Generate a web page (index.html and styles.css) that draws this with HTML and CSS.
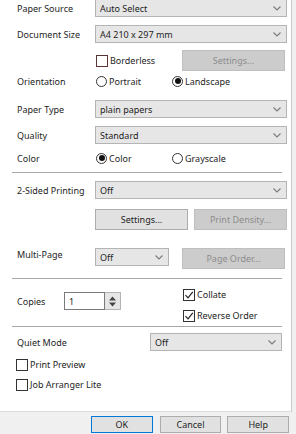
FILE: index.html
```html
<!DOCTYPE html>
<html lang="en">
<head>
    <meta charset="UTF-8">
    <meta name="viewport" content="width=device-width, initial-scale=1.0">
    <title>Printing Preferences</title>
    <link rel="stylesheet" href="styles.css">
</head>
<body>
    <div class="panel">
        <div class="row row-source">
            <span class="label">Paper Source</span>
            <div class="select wide">Auto Select<svg class="chev" width="8" height="5" viewBox="0 0 8 5"><path d="M0.5 0.5 L4 4 L7.5 0.5" fill="none" stroke="#7a7a7a" stroke-width="1.1"/></svg></div>
        </div>
        <div class="row row-docsize">
            <span class="label">Document Size</span>
            <div class="select wide">A4 210 x 297 mm<svg class="chev" width="8" height="5" viewBox="0 0 8 5"><path d="M0.5 0.5 L4 4 L7.5 0.5" fill="none" stroke="#7a7a7a" stroke-width="1.1"/></svg></div>
        </div>
        <div class="row row-borderless">
            <span class="label"></span>
            <label class="check border-red"><span class="box"></span>Borderless</label>
            <button class="btn disabled btn-settings">Settings...</button>
        </div>
        <div class="row row-orient">
            <span class="label">Orientation</span>
            <label class="radio col-a"><span class="dot"></span>Portrait</label>
            <label class="radio"><span class="dot on"></span>Landscape</label>
        </div>
        <div class="row row-ptype">
            <span class="label">Paper Type</span>
            <div class="select wide">plain papers<svg class="chev" width="8" height="5" viewBox="0 0 8 5"><path d="M0.5 0.5 L4 4 L7.5 0.5" fill="none" stroke="#7a7a7a" stroke-width="1.1"/></svg></div>
        </div>
        <div class="row row-quality">
            <span class="label">Quality</span>
            <div class="select wide">Standard<svg class="chev" width="8" height="5" viewBox="0 0 8 5"><path d="M0.5 0.5 L4 4 L7.5 0.5" fill="none" stroke="#7a7a7a" stroke-width="1.1"/></svg></div>
        </div>
        <div class="row row-color">
            <span class="label">Color</span>
            <label class="radio col-a"><span class="dot on"></span>Color</label>
            <label class="radio"><span class="dot"></span>Grayscale</label>
        </div>
        <div class="sep sep-1"></div>
        <div class="row row-duplex">
            <span class="label">2-Sided Printing</span>
            <div class="select wide">Off<svg class="chev" width="8" height="5" viewBox="0 0 8 5"><path d="M0.5 0.5 L4 4 L7.5 0.5" fill="none" stroke="#7a7a7a" stroke-width="1.1"/></svg></div>
        </div>
        <div class="row row-duplex-btns">
            <span class="label"></span>
            <button class="btn btn-half">Settings...</button>
            <button class="btn disabled btn-half btn-density">Print Density...</button>
        </div>
        <div class="row row-multi">
            <span class="label">Multi-Page</span>
            <div class="select short">Off<svg class="chev" width="8" height="5" viewBox="0 0 8 5"><path d="M0.5 0.5 L4 4 L7.5 0.5" fill="none" stroke="#7a7a7a" stroke-width="1.1"/></svg></div>
            <button class="btn disabled btn-order">Page Order...</button>
        </div>
        <div class="sep sep-2"></div>
        <div class="copies">
            <div class="copies-left">
                <span class="copies-label">Copies</span>
                <div class="spin">
                    <span class="spin-value">1</span>
                    <span class="spin-arrows">
                        <svg width="7" height="5" viewBox="0 0 7 5"><path d="M0 4.5 L3.5 0.5 L7 4.5 Z" fill="#444"/></svg>
                        <svg width="7" height="5" viewBox="0 0 7 5"><path d="M0 0.5 L3.5 4.5 L7 0.5 Z" fill="#444"/></svg>
                    </span>
                </div>
            </div>
            <div class="copies-right">
                <label class="check"><span class="box"><svg width="10" height="10" viewBox="0 0 10 10"><path d="M1.5 5.2 L4 7.8 L8.8 1.8" fill="none" stroke="#222" stroke-width="1.2"/></svg></span>Collate</label>
                <label class="check"><span class="box"><svg width="10" height="10" viewBox="0 0 10 10"><path d="M1.5 5.2 L4 7.8 L8.8 1.8" fill="none" stroke="#222" stroke-width="1.2"/></svg></span>Reverse Order</label>
            </div>
        </div>
        <div class="sep sep-3"></div>
        <div class="row row-quiet">
            <span class="label quiet-label">Quiet Mode</span>
            <div class="select quiet">Off<svg class="chev" width="8" height="5" viewBox="0 0 8 5"><path d="M0.5 0.5 L4 4 L7.5 0.5" fill="none" stroke="#7a7a7a" stroke-width="1.1"/></svg></div>
        </div>
        <label class="check solo preview"><span class="box"></span>Print Preview</label>
        <label class="check solo arranger"><span class="box"></span>Job Arranger Lite</label>
    </div>
    <div class="footer">
        <button class="btn foot-btn btn-ok">OK</button>
        <button class="btn foot-btn">Cancel</button>
        <button class="btn foot-btn btn-help">Help</button>
    </div>
</body>
</html>
```

FILE: styles.css
```css
body {
    margin: 0;
    padding: 0;
    font-family: "Noto Sans", "Open Sans", sans-serif;
    font-size: 9px;
    color: #1e1e1e;
    background: #f0f0f0;
    width: 296px;
    height: 434px;
    overflow: hidden;
}

.panel {
    background: #fff;
    width: 274px;
    height: 411px;
    padding-left: 17px;
    border-right: 1px solid #c9c9c9;
    border-bottom: 1px solid #dcdcdc;
    box-sizing: content-box;
    display: flex;
    flex-direction: column;
}

.row {
    display: flex;
    align-items: center;
    flex-shrink: 0;
}

.label {
    width: 78px;
    flex-shrink: 0;
}

.select {
    box-sizing: border-box;
    height: 18px;
    border: 1px solid #b4b4b4;
    background: #e6e6e6;
    padding-left: 4px;
    display: flex;
    align-items: center;
    justify-content: space-between;
    padding-right: 5px;
}

.select.wide {
    width: 192px;
}

.select.short {
    width: 74px;
}

.select.quiet {
    width: 132px;
}

.chev {
    flex-shrink: 0;
}

.row-source { margin-top: -1px; }
.row-docsize { margin-top: 8px; }
.row-borderless { margin-top: 7px; height: 21px; }
.row-orient { margin-top: 3px; height: 14px; }
.row-ptype { margin-top: 12px; }
.row-quality { margin-top: 8px; }
.row-color { margin-top: 7px; height: 14px; }
.row-duplex { margin-top: 8px; }
.row-duplex-btns { margin-top: 10px; }
.row-multi { margin-top: 18px; align-items: flex-start; }
.row-quiet { margin-top: 6px; }

.check, .radio {
    display: flex;
    align-items: center;
    gap: 2px;
}

.box {
    width: 12px;
    height: 12px;
    box-sizing: border-box;
    border: 1px solid #333;
    background: #fff;
    display: flex;
    align-items: center;
    justify-content: center;
}

.border-red .box {
    border-color: #5a3434;
}

.border-red {
    margin-left: 1px;
    width: 86px;
}

.dot {
    width: 11px;
    height: 11px;
    box-sizing: border-box;
    border: 1px solid #333;
    border-radius: 50%;
    background: #fff;
    display: flex;
    align-items: center;
    justify-content: center;
    margin-left: 1px;
}

.dot.on::after {
    content: "";
    width: 6px;
    height: 6px;
    border-radius: 50%;
    background: #111;
}

.col-a {
    width: 76px;
}

.btn {
    font-family: inherit;
    font-size: 9px;
    color: #1e1e1e;
    background: #e1e1e1;
    border: 1px solid #adadad;
    padding: 0;
    height: 21px;
    box-sizing: border-box;
}

.btn.disabled {
    background: #cccccc;
    border-color: #bfbfbf;
    color: #8d8d8d;
}

.btn-settings {
    width: 103px;
}

.btn-half {
    width: 93px;
}

.btn-density {
    margin-left: 6px;
}

.btn-order {
    width: 103px;
    margin-left: 13px;
}

.sep {
    height: 1px;
    background: #a8a8a8;
    width: 270px;
    margin-left: -5px;
    flex-shrink: 0;
}

.sep-1 { margin-top: 7px; }
.sep-2 { margin-top: 9px; }
.sep-3 { margin-top: 4px; }

.copies {
    display: flex;
    margin-top: 9px;
    height: 34px;
    flex-shrink: 0;
}

.copies-left {
    display: flex;
    align-items: center;
    align-self: flex-start;
    width: 166px;
    margin-top: 4px;
}

.copies-label {
    width: 47px;
}

.spin {
    display: flex;
    height: 18px;
}

.spin-value {
    width: 41px;
    box-sizing: border-box;
    border: 1px solid #7a7a7a;
    padding-left: 4px;
    display: flex;
    align-items: center;
}

.spin-arrows {
    width: 16px;
    box-sizing: border-box;
    border: 1px solid #b4b4b4;
    border-left: none;
    background: #e6e6e6;
    display: flex;
    flex-direction: column;
    align-items: center;
    justify-content: center;
    gap: 1px;
}

.copies-right {
    display: flex;
    flex-direction: column;
    gap: 8px;
}

.quiet-label {
    width: 133px;
}

.solo {
    margin-left: -1px;
    flex-shrink: 0;
}

.preview { margin-top: 7px; }
.arranger { margin-top: 7px; }

.footer {
    display: flex;
    padding-top: 4px;
    padding-left: 91px;
}

.foot-btn {
    width: 62px;
    height: 17px;
    margin-right: 7px;
}

.btn-ok {
    border-color: #0078d7;
}

.btn-help {
    margin-left: -1px;
}
```
